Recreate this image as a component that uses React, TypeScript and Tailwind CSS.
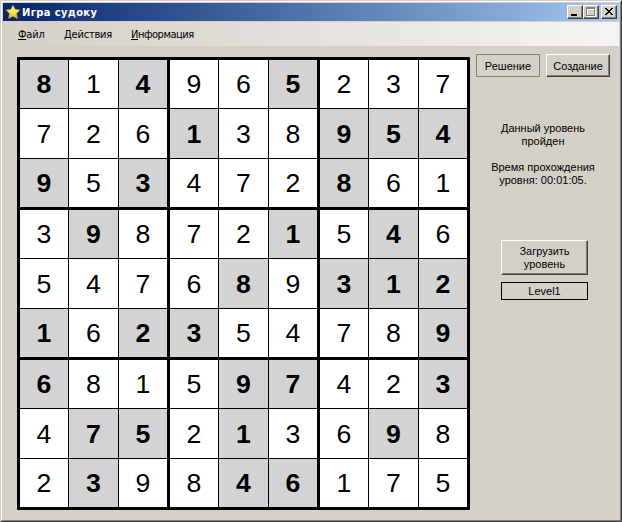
import type { ReactNode } from "react";

const rows = [
  "814965237",
  "726138954",
  "953472861",
  "398721546",
  "547689312",
  "162354789",
  "681597423",
  "475213698",
  "239846175",
];

// "x" marks a given digit: bold on a grey cell.
const givens = [
  "x.x..x...",
  "...x..xxx",
  "x.x...x..",
  ".x...x.x.",
  "....x.xxx",
  "x.xx....x",
  "x...xx..x",
  ".xx.x..x.",
  ".x..xx...",
];

const three = [0, 1, 2];

function Cell({ r, c }: { r: number; c: number }) {
  const given = givens[r][c] === "x";
  return (
    <div
      className={
        "flex items-center justify-center pt-px text-[26.67px] leading-none " +
        (given ? "bg-[#d3d3d3] font-bold" : "bg-white")
      }
    >
      {rows[r][c]}
    </div>
  );
}

function Board() {
  return (
    <div className="grid h-[453px] w-[453px] shrink-0 grid-cols-3 grid-rows-3 gap-[3px] rounded-[1px] bg-black p-[3px]">
      {three.map((br) =>
        three.map((bc) => (
          <div key={`${br}${bc}`} className="grid grid-cols-[48px_49px_48px] grid-rows-[48px_49px_48px] gap-px bg-black">
            {three.map((r) =>
              three.map((c) => <Cell key={`${r}${c}`} r={br * 3 + r} c={bc * 3 + c} />)
            )}
          </div>
        ))
      )}
    </div>
  );
}

function CaptionButton({ children }: { children: ReactNode }) {
  return (
    <div className="h-[14px] w-4 border border-t-white border-l-white border-r-[#404040] border-b-[#404040] bg-[#d4d0c8] shadow-[inset_-1px_-1px_0_#808080]">
      <svg width="14" height="12" shapeRendering="crispEdges" className="block">
        {children}
      </svg>
    </div>
  );
}

const raised =
  "border border-t-white border-l-white border-r-[#404040] border-b-[#404040] shadow-[inset_-1px_-1px_0_#808080]";

export default function App() {
  return (
    <div className="h-[522px] w-[622px] overflow-hidden border border-t-[#d4d0c8] border-l-[#d4d0c8] border-r-[#404040] border-b-[#404040] bg-[#d4d0c8] font-['Liberation_Sans',Arial,sans-serif] text-[11px] leading-[13px] text-black">
      <div className="flex h-[520px] w-[620px] flex-col border border-t-white border-l-white border-r-[#808080] border-b-[#808080] p-px">
        <header className="flex h-[18px] shrink-0 items-center bg-linear-to-r from-[#0a246a] to-[#a6caf0] pr-[2px] pl-[3px]">
          <svg width="14" height="14" viewBox="0 0 14 14">
            <defs>
              <linearGradient id="star" x1="0" y1="0" x2="0" y2="1">
                <stop offset="0" stopColor="#fff3a0" />
                <stop offset="0.55" stopColor="#ffe34c" />
                <stop offset="1" stopColor="#e9ac18" />
              </linearGradient>
            </defs>
            <path
              d="M7 .3 9.1 4.4 13.8 5 10.5 8.4 11.4 13.4 7 11.2 2.6 13.4 3.5 8.4.2 5 4.9 4.4Z"
              fill="url(#star)"
              stroke="#e2b22c"
              strokeWidth=".5"
              strokeLinejoin="round"
            />
          </svg>
          <span className="ml-[2px] font-['DejaVu_Sans_Condensed','DejaVu_Sans',sans-serif] text-[11px] font-bold tracking-[0.4px] text-white [font-stretch:condensed]">
            Игра судоку
          </span>
          <div className="ml-auto flex">
            <CaptionButton>
              <rect x="3" y="8" width="6" height="2" fill="#000" />
            </CaptionButton>
            <CaptionButton>
              <path d="M3 1h9v9h-9z M4 3v6h7v-6z" fill="#fff" fillRule="evenodd" transform="translate(0 1)" />
              <path d="M2 1h9v9h-9z M3 3v6h7v-6z" fill="#808080" fillRule="evenodd" />
            </CaptionButton>
            <div className="w-[2px]" />
            <CaptionButton>
              <path
                d="M3 2h2v1h1v1h2v-1h1v-1h2v1h-1v1h-1v1h-1v1h1v1h1v1h1v1h-2v-1h-1v-1h-2v1h-1v1h-2v-1h1v-1h1v-1h1v-1h-1v-1h-1v-1h-1z"
                fill="#000"
              />
            </CaptionButton>
          </div>
        </header>

        <nav className="mt-px flex h-6 shrink-0 items-center bg-linear-to-r from-[#d4d0c8] to-[#f5f4f2] pl-[15px] font-['DejaVu_Sans_Condensed','DejaVu_Sans',sans-serif] [font-stretch:condensed]">
          <span className="w-[46px] tracking-[-0.2px]"><u>Ф</u>айл</span>
          <span className="w-[67px] tracking-[-0.2px]"><u>Д</u>ействия</span>
          <span className="tracking-[-0.45px]"><u>И</u>нформация</span>
        </nav>

        <main className="flex pt-[11px] pl-[14px]">
          <Board />
          <aside className="-mt-[3px] ml-[6px] flex w-[134px] flex-col">
            <div className="flex gap-[6px]">
              <button className="h-[23px] w-16 border border-[#808080] pt-px">Решение</button>
              <button className={"h-[23px] w-16 pt-px " + raised}>Создание</button>
            </div>
            <p className="mt-[45px] text-center">
              Данный уровень
              <br />
              пройден
              <br />
              <br />
              Время прохождения
              <br />
              уровня: 00:01:05.
            </p>
            <button className={"mt-[53px] ml-[25px] h-[35px] w-[87px] " + raised}>
              Загрузить
              <br />
              уровень
            </button>
            <div className="mt-[7px] ml-[25px] flex h-[18px] w-[87px] items-center justify-center border border-black pt-px">
              Level1
            </div>
          </aside>
        </main>
      </div>
    </div>
  );
}
